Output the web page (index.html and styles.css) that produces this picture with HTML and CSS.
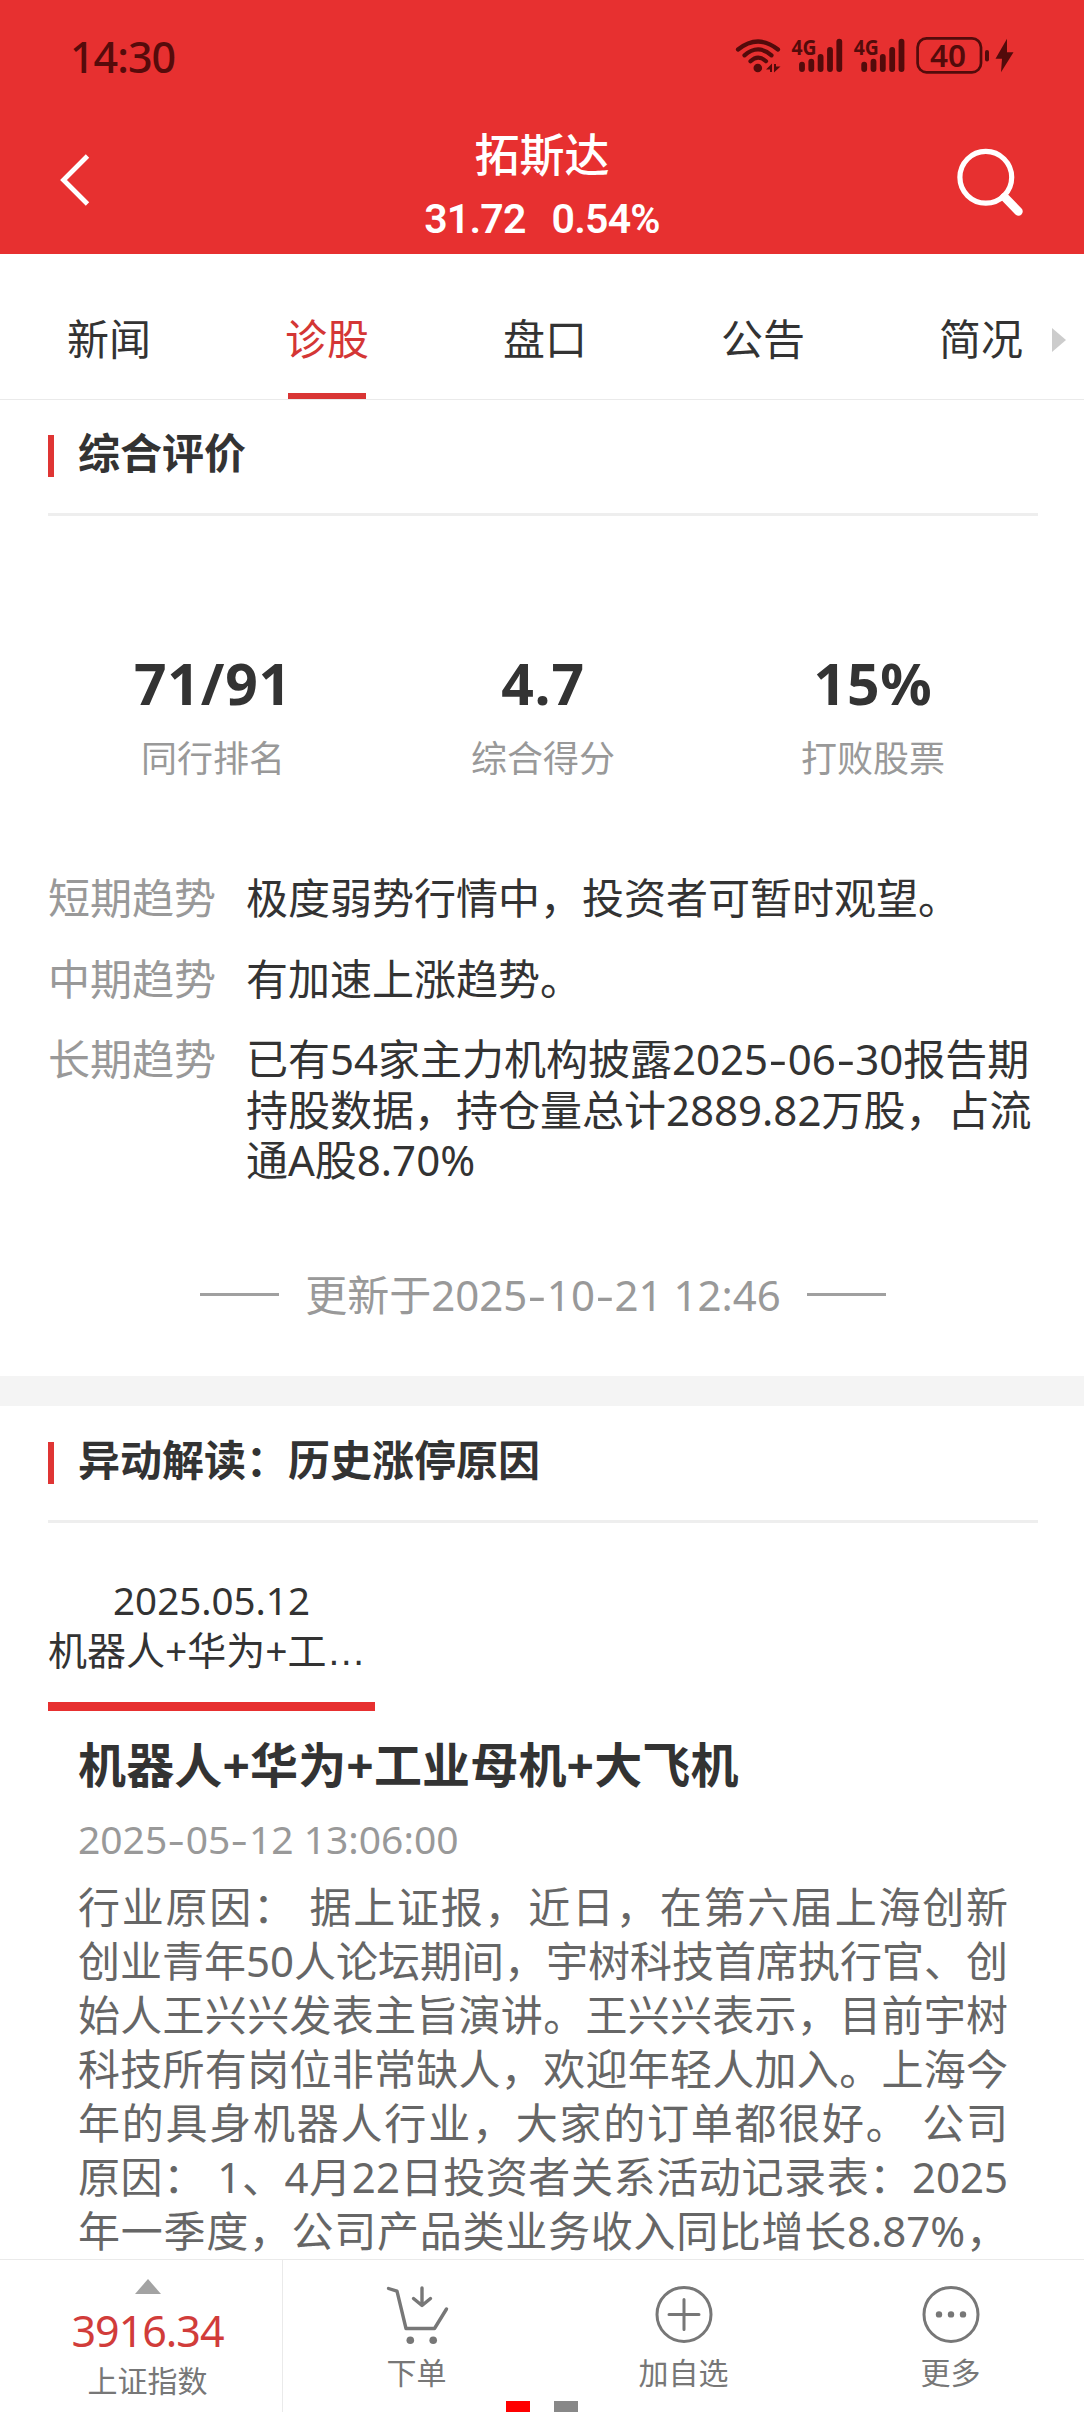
FILE: index.html
```html
<!DOCTYPE html>
<html lang="zh-CN">
<head>
<meta charset="utf-8">
<title>拓斯达</title>
<link rel="stylesheet" href="styles.css">
</head>
<body>
<div class="page">
  <header class="header">
    <div class="status">
      <span class="clock">14:30</span>
      <svg class="status-icons" width="280" height="64" viewBox="735 24 280 64" fill="none" stroke="#530b0b" stroke-linecap="round">
        <g stroke-width="4.2">
          <path d="M738 49.5Q758 33.5 778 49.5M744.5 55.3Q758 43.5 771.500 55.300M750.500 61.200Q758 54 766 61.200"/>
        </g>
        <g fill="#530b0b" stroke="none">
          <circle cx="757.8" cy="68" r="4.3"/>
          <path d="M766 69.500l6-6v8.500h-2v-2.500zM774 64h2v2.500h4.500l-6.500 6z"/>
          <path d="M1007 38.700l-11.500 20h6.500l-1 13.600 12.500-20h-6.500z"/>
          <text class="net" x="791.5" y="55.300" textLength="25" lengthAdjust="spacingAndGlyphs">4G</text>
          <text class="net" x="853.700" y="55.300" textLength="25" lengthAdjust="spacingAndGlyphs">4G</text>
          <text class="level" x="930" y="66.700" textLength="36" lengthAdjust="spacingAndGlyphs">40</text>
        </g>
        <g stroke-width="5.800">
          <path d="M802 64.600V69M811.300 61.600V69M820.600 57V69M830 50V69M839.300 41.600V69"/>
          <path d="M864.200 64.600V69M873.500 61.600V69M882.800 57V69M892.200 50V69M901.500 41.600V69"/>
        </g>
        <rect x="917.600" y="38.300" width="63.400" height="34" rx="9" stroke-width="2.700"/>
        <path d="M987 52v7.500" stroke-width="4"/>
      </svg>
    </div>
    <div class="titlebar">
      <svg class="back" width="34" height="60" viewBox="58 150 34 60" fill="none" stroke="#fff" stroke-width="4.800"><path d="M87.500 156L63.500 180l24 24"/></svg>
      <div class="quote">
        <h1 class="name">拓斯达</h1>
        <div class="price"><span>31.72</span><span>0.54%</span></div>
      </div>
      <svg class="search" width="72" height="76" viewBox="954 146 72 76" fill="none" stroke="#fff"><circle cx="985.800" cy="177.300" r="25.900" stroke-width="5.200"/><path d="M1004.500 197l14 14.500" stroke-width="8.500" stroke-linecap="round"/></svg>
    </div>
  </header>

  <nav class="tabs">
    <span class="tab">新闻</span>
    <span class="tab active">诊股</span>
    <span class="tab">盘口</span>
    <span class="tab">公告</span>
    <span class="tab">简况</span>
    <i class="more-arrow"></i>
  </nav>

  <main class="content">
    <section class="section">
      <h2 class="heading">综合评价</h2>
      <div class="stats">
        <div class="stat"><b>71/91</b><span>同行排名</span></div>
        <div class="stat"><b>4.7</b><span>综合得分</span></div>
        <div class="stat"><b>15%</b><span>打败股票</span></div>
      </div>
      <dl class="trends">
        <dt>短期趋势</dt><dd>极度弱势行情中，投资者可暂时观望。</dd>
        <dt>中期趋势</dt><dd>有加速上涨趋势。</dd>
        <dt>长期趋势</dt><dd>已有54家主力机构披露2025<i class="dash">-</i>06<i class="dash">-</i>30报告期<br>持股数据，持仓量总计2889.82万股，占流<br>通A股8.70%</dd>
      </dl>
      <div class="updated"><span>更新于2025<i class="dash">-</i>10<i class="dash">-</i>21 12:46</span></div>
    </section>

    <section class="section">
      <h2 class="heading">异动解读：历史涨停原因</h2>
      <div class="event">
        <span class="event-date">2025.05.12</span>
        <span class="event-name">机器人+华为+工<i class="ellipsis">…</i></span>
      </div>
      <article class="article">
        <h3 class="article-title">机器人+华为+工业母机+大飞机</h3>
        <time class="article-time">2025<i class="dash">-</i>05<i class="dash">-</i>12 13:06:00</time>
        <div class="body">
          <p>行业原因： 据上证报，近日，在第六届上海创新</p>
          <p>创业青年50人论坛期间，宇树科技首席执行官、创</p>
          <p>始人王兴兴发表主旨演讲。王兴兴表示，目前宇树</p>
          <p>科技所有岗位非常缺人，欢迎年轻人加入。上海今</p>
          <p>年的具身机器人行业，大家的订单都很好。 公司</p>
          <p>原因： 1、4月22日投资者关系活动记录表：2025</p>
          <p>年一季度，公司产品类业务收入同比增长8.87%，</p>
        </div>
      </article>
    </section>
  </main>

  <footer class="toolbar">
    <div class="index">
      <i class="up"></i>
      <span class="index-value">3916.34</span>
      <span class="index-name">上证指数</span>
    </div>
    <div class="action">
      <svg width="64" height="62" viewBox="384 2284 64 62" fill="none" stroke="#777" stroke-width="3.400" stroke-linecap="round" stroke-linejoin="round"><path d="M387.500 2288.500l8.500 2.700L405 2328.500h28.500l12-19.500M421 2288v17M412.500 2298.500l8.500 7 8.500-7"/><g fill="#777" stroke="none"><circle cx="409.300" cy="2340.300" r="3.800"/><circle cx="432.200" cy="2340.300" r="3.800"/></g></svg>
      <span>下单</span>
    </div>
    <div class="action">
      <svg width="64" height="62" viewBox="-32 -30.400 64 62" fill="none" stroke="#777" stroke-width="3" stroke-linecap="round"><circle r="27"/><path d="M-15 0h30M0-15v30"/></svg>
      <span>加自选</span>
    </div>
    <div class="action">
      <svg width="64" height="62" viewBox="-32 -30.400 64 62" fill="#777"><circle r="27" fill="none" stroke="#777" stroke-width="3"/><circle cx="-12" r="3.200"/><circle r="3.200"/><circle cx="12" r="3.200"/></svg>
      <span>更多</span>
    </div>
    <div class="pager"><i class="current"></i><i></i></div>
  </footer>
</div>
</body>
</html>
```
FILE: styles.css
```css
* { box-sizing: border-box; margin: 0; padding: 0; }

body {
  background: #fff;
  color: #333;
  font: 42px/50px "Noto Sans", "Noto Sans CJK SC", sans-serif;
}

i { font-style: normal; }

.page {
  display: flex;
  flex-direction: column;
  width: 1084px;
  height: 2412px;
  overflow: hidden;
}

/* header */
.header {
  flex: none;
  height: 254px;
  background: #e73030;
  color: #fff;
}

.status {
  display: flex;
  justify-content: space-between;
  height: 112px;
  padding: 24px 69px 0 70px;
}

.clock {
  color: #560b0b;
  font-size: 43px;
  font-weight: 500;
  letter-spacing: -1px;
  line-height: 66px;
}

.net { font: 700 22px "Noto Sans", sans-serif; }
.level { font: 600 31px "Noto Sans", sans-serif; }

.titlebar {
  display: flex;
  justify-content: space-between;
  height: 142px;
  padding: 0 58px;
}

.back { width: 72px; height: 60px; margin-top: 38px; padding-right: 38px; }
.search { margin-top: 34px; }

.quote { padding-top: 16px; text-align: center; }

.name {
  font-size: 45px;
  font-weight: 500;
  line-height: 54px;
}

.price {
  display: flex;
  justify-content: center;
  gap: 26px;
  font: 600 41px/75px Roboto, sans-serif;
  letter-spacing: -0.8px;
}

/* tabs */
.tabs {
  position: relative;
  flex: none;
  display: flex;
  width: 1090px;
  height: 146px;
  padding-top: 25px;
  border-bottom: 1px solid #eaeaea;
}

.tab {
  display: flex;
  flex-direction: column;
  align-items: center;
  width: 218px;
  line-height: 119px;
}

.active { color: #d43635; }

.active::after {
  content: "";
  flex: none;
  width: 78px;
  height: 6px;
  margin-top: -5px;
  background: #d93534;
}

.more-arrow {
  position: absolute;
  left: 1052px;
  top: 74px;
  border: solid transparent;
  border-width: 12px 0 12px 14px;
  border-left-color: #ccc;
}

/* sections */
.content { flex: 1; min-height: 0; overflow: hidden; }

.section { padding: 35px 46px 0 48px; }

.section + .section {
  border-top: 30px solid #f4f4f4;
  padding-top: 36px;
}

.heading {
  position: relative;
  height: 81px;
  padding-left: 30px;
  border-bottom: 3px solid #eee;
  font-size: 42px;
  font-weight: 700;
  line-height: 36px;
}

.heading::before {
  content: "";
  position: absolute;
  left: 0;
  top: 0;
  width: 6px;
  height: 42px;
  background: #df3534;
}

.stats {
  display: grid;
  grid-template-columns: repeat(3, 1fr);
  padding-top: 131px;
  text-align: center;
}

.stat { display: flex; flex-direction: column; }
.stat b { font-size: 57px; letter-spacing: 0.8px; line-height: 72px; }
.stat span { color: #999; font-size: 36px; line-height: 80px; }

.trends {
  display: grid;
  grid-template-columns: 198px 1fr;
  row-gap: 30px;
  padding-top: 74px;
  line-height: 50.6px;
  white-space: nowrap;
}

.trends dt { color: #999; }

.dash {
  display: inline-block;
  margin: 0 3px;
  transform: scaleX(1.35);
}

.updated {
  display: flex;
  justify-content: center;
  align-items: center;
  gap: 26px;
  height: 111px;
  margin-top: 79px;
  padding-bottom: 51px;
  color: #999;
  line-height: 60px;
}

.updated::before,
.updated::after {
  content: "";
  width: 79px;
  height: 3px;
  background: #a0a0a0;
}

.event {
  display: flex;
  flex-direction: column;
  width: 327px;
  height: 188px;
  padding-top: 52px;
  border-bottom: 9px solid #e73030;
  font-size: 39px;
  line-height: 50px;
  white-space: nowrap;
}

.event-date {
  font-size: 38.5px;
  text-align: center;
}

.ellipsis { font-family: "Liberation Sans", sans-serif; }

.article { padding: 19px 30px 0; }
.article-title { font-size: 48px; line-height: 70px; letter-spacing: 0.15px; }

.article-time {
  display: block;
  color: #999;
  font-size: 39px;
  line-height: 78px;
}

.body {
  padding-top: 2px;
  color: #666;
  line-height: 54px;
}

.body p {
  white-space: nowrap;
  text-align: justify;
  text-align-last: justify;
}

/* bottom bar */
.toolbar {
  position: relative;
  flex: none;
  display: flex;
  height: 153px;
  border-top: 1px solid #eaeaea;
  background: #fff;
  color: #777;
  font-size: 30px;
}

.index {
  display: flex;
  flex-direction: column;
  align-items: center;
  width: 283px;
  padding: 19px 0 0 13px;
  border-right: 1px solid #eaeaea;
}

.up {
  border: solid transparent;
  border-width: 0 13px 15px;
  border-bottom-color: #a3a3a3;
}

.index-value {
  color: #d13c3a;
  font-size: 43px;
  letter-spacing: -1px;
  line-height: 73px;
}

.index-name { line-height: 27px; }

.action {
  display: flex;
  flex: 1;
  flex-direction: column;
  align-items: center;
  padding-top: 24px;
  line-height: 54px;
}

.pager {
  position: absolute;
  left: 506px;
  bottom: 0;
  display: flex;
  gap: 24px;
}

.pager i { width: 24px; height: 11px; background: #888; }
.pager .current { background: #f00; }
```
